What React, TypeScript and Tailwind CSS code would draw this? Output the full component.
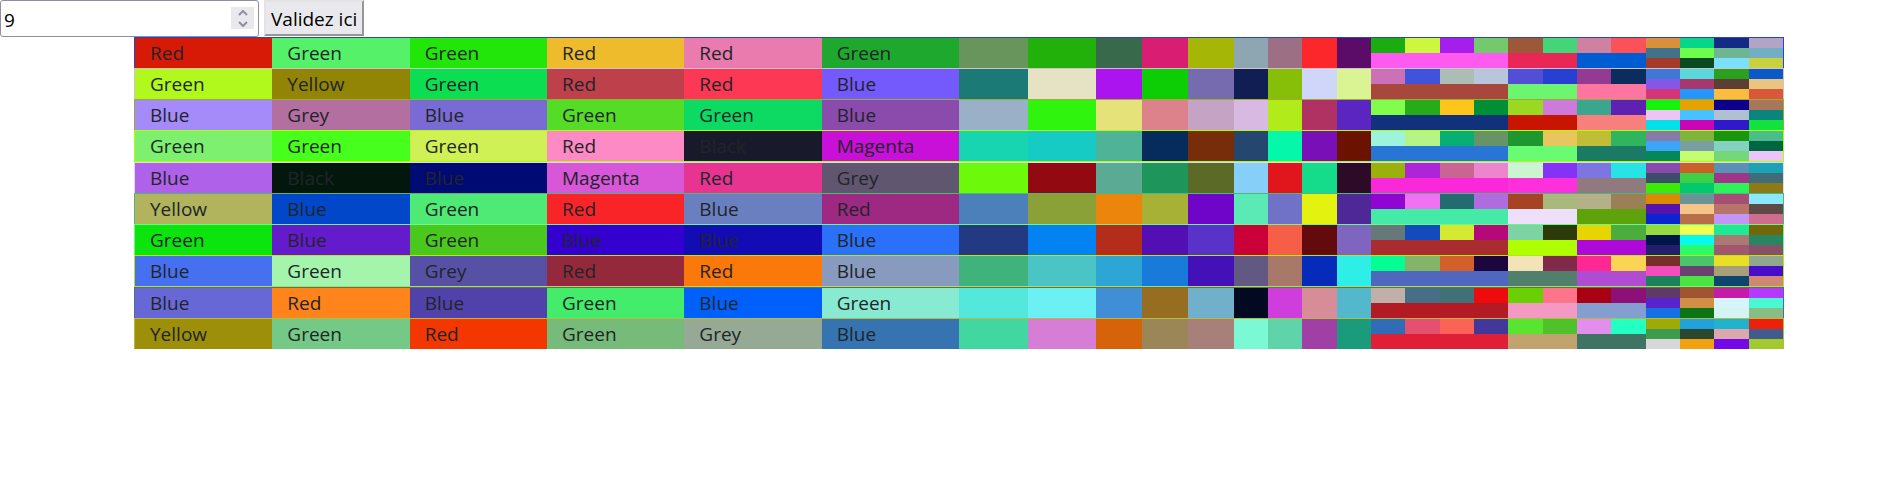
import { useState } from "react";

type Row = {
  border: string;
  closed?: boolean;
  names: [string, string][];
  halves: string[];
  thirds: string[];
  quarters: string[];
  upper: string[];
  lower: string[];
  tiles: string[];
};

const list = (s: string) => s.split(" ").map((c) => "#" + c);

const rows: Row[] = [
  {
    border: "#2743cf",
    names: [["Red", "#d71a06"], ["Green", "#55f269"], ["Green", "#22e509"], ["Red", "#eebb2d"], ["Red", "#e97bae"], ["Green", "#1ea82e"]],
    halves: list("68955b 22b00a"),
    thirds: list("38694b d91d72 a5b607"),
    quarters: list("8ea5b2 9c6f85 fb272a 5b0c69"),
    upper: list("19ad0f ccf73e a51eeb 74c96d 9d583a 44d579 ce829f fb5259"),
    lower: list("fd5af0 e92756 005dd1"),
    tiles: list("d8913a 07d68a 132a86 b1a4c5 42728a 70fb4f 6eb591 73aec2 a5392a 0b4a20 7ddffc c9d13f"),
  },
  {
    border: "#d2c0cb",
    names: [["Green", "#b1f91c"], ["Yellow", "#928404"], ["Green", "#0bdf51"], ["Red", "#be404b"], ["Red", "#fd3854"], ["Blue", "#7459fd"]],
    halves: list("1c7a76 e6e2c4"),
    thirds: list("ac14ef 0dce04 776bb0"),
    quarters: list("111e54 86be08 d0d6fa daf393"),
    upper: list("cc70b7 4153dd abbdb5 b8c6db 524fd6 2640d2 943a90 0b2d5e"),
    lower: list("a8483d 6cf56e fe75a2"),
    tiles: list("3e78d2 5ad9dc 2aa01f 0b59c9 8457e9 a8376c 5b3f35 eac57f d5357b 2696fb fbbc41 d95839"),
  },
  {
    border: "#9eac36",
    names: [["Blue", "#a58bfa"], ["Grey", "#b26fa0"], ["Blue", "#796bd3"], ["Green", "#54dc27"], ["Green", "#0cda62"], ["Blue", "#8a4bac"]],
    halves: list("9ab0c6 2ff40d"),
    thirds: list("e6e27a dd818a c4a3c5"),
    quarters: list("d7b9e2 b1eb19 af3262 5a25c0"),
    upper: list("82fd4c 28ab19 fec51b 008f35 9bd821 ce7adb 3aa68d 5f21b1"),
    lower: list("12317b c81500 f7807d"),
    tiles: list("13f30b e6a203 0c008b a8765b edc5f4 48c1ff b0bfd2 0a857d 04e0ea cb05b5 3018cb 12e23e"),
  },
  {
    border: "#aeff00",
    closed: true,
    names: [["Green", "#7df06f"], ["Green", "#47ff1c"], ["Green", "#d0f155"], ["Red", "#fe8ac5"], ["Black", "#181a2c"], ["Magenta", "#c810d8"]],
    halves: list("17d5b1 15cbc4"),
    thirds: list("4fb497 062b5d 772d09"),
    quarters: list("24466f 05f7aa 780fb7 6b1200"),
    upper: list("9df4dd b5f487 07ae76 689366 1e9730 e8c65d c1bd37 30b45d"),
    lower: list("2875d5 69fb72 1a7a63"),
    tiles: list("867ba9 80b43b 1a960c 4abd8d 3da5f8 799fa5 84d2bf 006641 058758 c4fd71 75d878 ebc5f8"),
  },
  {
    border: "#ddd9ef",
    names: [["Blue", "#af62e9"], ["Black", "#03170c"], ["Blue", "#000a73"], ["Magenta", "#d856d8"], ["Red", "#e73491"], ["Grey", "#60566f"]],
    halves: list("6df90a 930911"),
    thirds: list("5bab94 1e955a 5b6a27"),
    quarters: list("86cff8 e1161d 14dc8a 2d0a28"),
    upper: list("9ab00b ae25d9 ca6491 ec85cb caf5cf 8432f3 7d75e2 28e3e5"),
    lower: list("f928d8 fd30dc 917980"),
    tiles: list("884ba9 c96027 5a92b5 1ca2b5 3b4d6a 3ed047 a03688 3f6c77 3de908 00c86b 2df25b 8b7a16"),
  },
  {
    border: "#4eb77d",
    names: [["Yellow", "#b2b45d"], ["Blue", "#0047ca"], ["Green", "#4eea75"], ["Red", "#f82428"], ["Blue", "#6a7fbf"], ["Red", "#9e2982"]],
    halves: list("4b80ba 89a136"),
    thirds: list("ec850c a6b136 7005ca"),
    quarters: list("5be9b5 6f72c6 e3f30f 4e2896"),
    upper: list("9105d2 f071f2 246b70 af6cdf a54322 a8b97b b4b087 9a8054"),
    lower: list("46eaa7 eedffb 5ea30b"),
    tiles: list("d98b04 6a949a a74e76 8de7fd 5711af f5c486 b77468 5f4946 0a24d0 b76e49 c494f7 d06c8f"),
  },
  {
    border: "#67fb85",
    names: [["Green", "#0be40d"], ["Blue", "#641bcb"], ["Green", "#4bc81e"], ["Blue", "#3300cf"], ["Blue", "#130bb4"], ["Blue", "#2a70f8"]],
    halves: list("233a82 0382f1"),
    thirds: list("b32d1a 5210b4 5932ca"),
    quarters: list("ca0039 f75e48 620a0c 7d65c0"),
    upper: list("667877 134abc d6e932 b50879 7dd4a2 2d3b0a e6d500 4bad3c"),
    lower: list("a82c30 affe02 ad09d9"),
    tiles: list("95db3e f3ff50 1fe995 74660b 001548 05fbf0 a97a74 27865f 241f6d 2bfa6b a1576d 8a4f68"),
  },
  {
    border: "#b5e712",
    closed: true,
    names: [["Blue", "#4770f0"], ["Green", "#a4f5ab"], ["Grey", "#5651a4"], ["Red", "#93293a"], ["Red", "#fb780b"], ["Blue", "#889bbe"]],
    halves: list("40b27b 4ac4c4"),
    thirds: list("2da6d6 187ad9 4411b8"),
    quarters: list("625983 a87869 062ab9 2defe8"),
    upper: list("03ff91 83b468 d2602a 1b073d f3e3b6 812948 fe2894 f9d553"),
    lower: list("5067c0 50806b b04bd3"),
    tiles: list("772f29 49c66c e9df25 91a88e f24dba 694270 a69f79 480dcb 1b835c 4be341 0c466e d08872"),
  },
  {
    border: "#54689f",
    names: [["Blue", "#6768d6"], ["Red", "#fe841b"], ["Blue", "#5042aa"], ["Green", "#43ec6b"], ["Blue", "#0060fc"], ["Green", "#89ead2"]],
    halves: list("54e7dc 6bf0f4"),
    thirds: list("408fd6 976d21 70b0ca"),
    quarters: list("030920 d03ddd d68d97 53b8cb"),
    upper: list("c1b0aa 476e87 427078 ed0b0e 69d004 fe748b aa0014 8d0f78"),
    lower: list("b31b24 f499c1 849fcf"),
    tiles: list("603969 a15432 c61aa9 b439fd 5922cd d08e47 d6f4fa 49f7d1 1470e3 0c7412 d5f3f1 88bd84"),
  },
  {
    border: "#b6bb3b",
    names: [["Yellow", "#9e8f0b"], ["Green", "#74c986"], ["Red", "#f43700"], ["Green", "#77bb7a"], ["Grey", "#95a994"], ["Blue", "#3673b1"]],
    halves: list("42d6a1 d67ed5"),
    thirds: list("d6630a 9a8656 a8807a"),
    quarters: list("7bf9d4 5fd3a9 a040a5 199b7c"),
    upper: list("316db6 e55071 fb6359 42379b 5ae432 4ec12b e18eed 24ffc4"),
    lower: list("df1f37 c1a36e 3f7464"),
    tiles: list("9eaa08 20a2da 20b3ce ef2009 3d9c4e 2a4831 dda8ad 425b8f d9d8d8 f2a111 7309e6 a3ca2d"),
  },
];

function Cell({ color, className }: { color: string; className: string }) {
  return <div className={className} style={{ backgroundColor: color }} />;
}

function ColorRow({ row }: { row: Row }) {
  return (
    <div
      className={`grid grid-cols-12 border-x border-t ${row.closed ? "border-b" : ""}`}
      style={{ borderColor: row.border }}
    >
      {row.names.map(([name, color], i) => (
        <div key={i} className="px-[15px] leading-[30px]" style={{ backgroundColor: color }}>
          {name}
        </div>
      ))}
      <div className="grid grid-cols-2">
        {row.halves.map((c, i) => <Cell key={i} color={c} className="h-full" />)}
      </div>
      <div className="grid grid-cols-3">
        {row.thirds.map((c, i) => <Cell key={i} color={c} className="h-full" />)}
      </div>
      <div className="grid grid-cols-4">
        {row.quarters.map((c, i) => <Cell key={i} color={c} className="h-full" />)}
      </div>
      <div className="col-span-2 grid grid-cols-8 grid-rows-2">
        {row.upper.map((c, i) => <Cell key={i} color={c} className="h-full" />)}
        {row.lower.map((c, i) => <Cell key={i} color={c} className={i === 0 ? "col-span-4" : "col-span-2"} />)}
      </div>
      <div className="grid grid-cols-4 grid-rows-3">
        {row.tiles.map((c, i) => <Cell key={i} color={c} className="h-full" />)}
      </div>
    </div>
  );
}

function Chevron({ d }: { d: string }) {
  return (
    <svg viewBox="0 0 10 6" className="h-[6px] w-[10px]" fill="none" stroke="#8f8f9d" strokeWidth="2">
      <path d={d} />
    </svg>
  );
}

export default function App() {
  const [count, setCount] = useState(9);
  return (
    <main className="bg-white font-['Open_Sans',sans-serif] text-[19px] text-[#212529]">
      <form className="flex items-start gap-[5px]" onSubmit={(e) => e.preventDefault()}>
        <div className="relative">
          <input
            type="number"
            aria-label="Nombre"
            value={count}
            onChange={(e) => setCount(Number(e.target.value))}
            className="block h-[37px] w-[259px] appearance-none rounded-[3px] border border-[#8f8f9d] bg-white pt-[2px] pl-[3px] leading-[30px] text-black outline-none [-moz-appearance:textfield] [&::-webkit-inner-spin-button]:appearance-none"
          />
          <div className="absolute top-[7px] right-[5px] flex h-[22px] w-[23px] flex-col bg-[#e9e9ed]">
            <button type="button" aria-label="Plus" onClick={() => setCount(count + 1)} className="flex flex-1 items-center justify-center">
              <Chevron d="M1 5 L5 1 L9 5" />
            </button>
            <button type="button" aria-label="Moins" onClick={() => setCount(count - 1)} className="flex flex-1 items-center justify-center">
              <Chevron d="M1 1 L5 5 L9 1" />
            </button>
          </div>
        </div>
        <button
          type="submit"
          className="h-9 border-2 border-t-[#e3e3e3] border-r-[#979797] border-b-[#979797] border-l-[#e3e3e3] bg-[#e9e9ed] px-[5px] pt-[2px] leading-[30px] text-black"
        >
          Validez ici
        </button>
      </form>
      <section className="mr-[99px] ml-[134px]">
        {rows.map((row, i) => <ColorRow key={i} row={row} />)}
      </section>
    </main>
  );
}
